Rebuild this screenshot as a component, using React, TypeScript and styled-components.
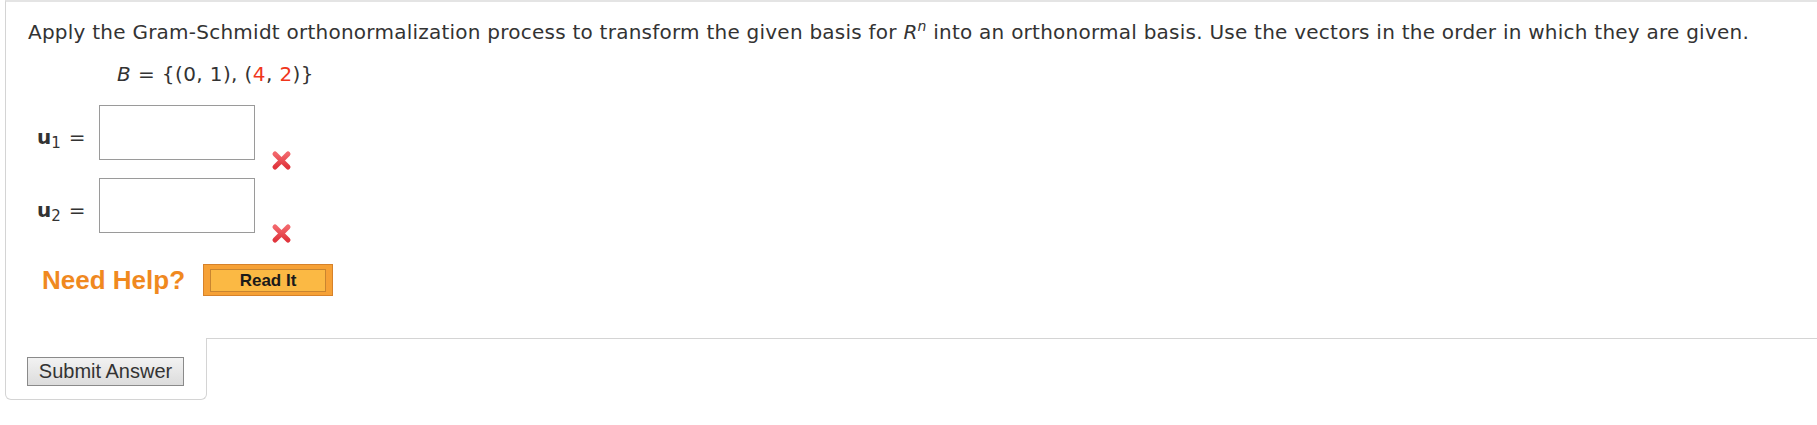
import React from "react";
import styled, { createGlobalStyle } from "styled-components";

const GlobalStyle = createGlobalStyle`
  html, body { margin: 0; padding: 0; background: #ffffff; }
  body { font-family: "DejaVu Sans", Verdana, sans-serif; color: #333333; }
`;

const Page = styled.div`
  padding-left: 5px;
  width: 1812px;
`;

const Panel = styled.section`
  border-top: 2px solid #e4e4e4;
  border-left: 1px solid #d4d4d4;
  padding: 18px 0 42px 22px;
`;

const Prompt = styled.p`
  margin: 0;
  font-size: 20px;
  line-height: 24px;
  letter-spacing: 0.24px;
  color: #333333;
`;

const Var = styled.i`
  font-style: italic;
`;

const Sup = styled.sup`
  font-size: 14px;
  font-style: italic;
  vertical-align: 8px;
  line-height: 0;
`;

const MathLine = styled.div`
  margin: 18px 0 0 89px;
  font-size: 20px;
  line-height: 24px;
  letter-spacing: 0.4px;
  white-space: pre;
`;

const Red = styled.span`
  color: #f0361c;
`;

const Answers = styled.div`
  display: flex;
  flex-direction: column;
  gap: 18px;
  margin-top: 19px;
`;

const AnswerRow = styled.div`
  display: flex;
  align-items: flex-end;
`;

const Label = styled.label`
  width: 62px;
  margin-left: 9px;
  align-self: center;
  padding-top: 8px;
  font-size: 20px;
  line-height: 24px;
  white-space: nowrap;
`;

const Bold = styled.b`
  font-weight: bold;
`;

const Sub = styled.sub`
  font-size: 15px;
  vertical-align: -4px;
  line-height: 0;
  margin-right: 8px;
`;

const Input = styled.input`
  box-sizing: border-box;
  width: 156px;
  height: 55px;
  border: 1px solid #9a9a9a;
  background: #ffffff;
  margin: 0;
  padding: 0 6px;
  font-size: 20px;
`;

const Mark = styled.span`
  display: inline-flex;
  margin-left: 16px;
  margin-bottom: -11px;
  width: 21px;
  height: 21px;
`;

const HelpRow = styled.div`
  display: flex;
  align-items: center;
  gap: 18px;
  margin: 31px 0 0 14px;
`;

const NeedHelp = styled.span`
  font-family: "Liberation Sans", Arial, sans-serif;
  font-weight: bold;
  font-size: 26px;
  line-height: 30px;
  color: #f0891f;
`;

const ReadItButton = styled.button`
  box-sizing: border-box;
  width: 130px;
  height: 32px;
  padding: 4px 6px 3px 6px;
  margin: 0;
  background: #f6a136;
  border: 1px solid #d7822a;
  cursor: pointer;
  display: flex;
`;

const ReadItFace = styled.span`
  flex: 1;
  display: flex;
  align-items: center;
  justify-content: center;
  background: #fbb944;
  border: 1px solid #c98530;
  font-family: "Liberation Sans", Arial, sans-serif;
  font-weight: bold;
  font-size: 17px;
  color: #1a1a1a;
`;

const Footer = styled.div`
  display: flex;
`;

const Tab = styled.div`
  box-sizing: border-box;
  width: 202px;
  border-left: 1px solid #d4d4d4;
  border-right: 1px solid #d4d4d4;
  border-bottom: 1px solid #d4d4d4;
  border-radius: 0 0 6px 6px;
  padding: 19px 0 13px 21px;
`;

const Filler = styled.div`
  flex: 1;
  border-top: 1px solid #d4d4d4;
`;

const SubmitButton = styled.button`
  box-sizing: border-box;
  width: 157px;
  height: 29px;
  margin: 0;
  padding: 0;
  border: 1px solid #8a8a8a;
  background: linear-gradient(#f2f2f2, #dcdcdc);
  font-family: "Liberation Sans", Arial, sans-serif;
  font-size: 20px;
  color: #333333;
  cursor: pointer;
`;

const XIcon = () => (
  <svg width="21" height="21" viewBox="0 0 21 21">
    <defs>
      <linearGradient id="xg" x1="0" y1="0" x2="0" y2="1">
        <stop offset="0" stopColor="#f2666b" />
        <stop offset="1" stopColor="#e0353d" />
      </linearGradient>
    </defs>
    <path
      d="M4 4 L17 17 M17 4 L4 17"
      stroke="url(#xg)"
      strokeWidth="5"
      strokeLinecap="round"
      fill="none"
    />
  </svg>
);

const answers = [
  { id: "u1", sub: "1" },
  { id: "u2", sub: "2" },
];

export default function App() {
  return (
    <>
      <GlobalStyle />
      <Page>
        <Panel>
          <Prompt>
            Apply the Gram-Schmidt orthonormalization process to transform the
            given basis for <Var>R</Var>
            <Sup>n</Sup> into an orthonormal basis. Use the vectors in the
            order in which they are given.
          </Prompt>
          <MathLine>
            <Var>B</Var> = {"{"}(0, 1), (<Red>4</Red>, <Red>2</Red>){"}"}
          </MathLine>
          <Answers>
            {answers.map((a) => (
              <AnswerRow key={a.id}>
                <Label htmlFor={a.id}>
                  <Bold>u</Bold>
                  <Sub>{a.sub}</Sub>=
                </Label>
                <Input id={a.id} type="text" />
                <Mark>
                  <XIcon />
                </Mark>
              </AnswerRow>
            ))}
          </Answers>
          <HelpRow>
            <NeedHelp>Need Help?</NeedHelp>
            <ReadItButton>
              <ReadItFace>Read It</ReadItFace>
            </ReadItButton>
          </HelpRow>
        </Panel>
        <Footer>
          <Tab>
            <SubmitButton>Submit Answer</SubmitButton>
          </Tab>
          <Filler />
        </Footer>
      </Page>
    </>
  );
}
